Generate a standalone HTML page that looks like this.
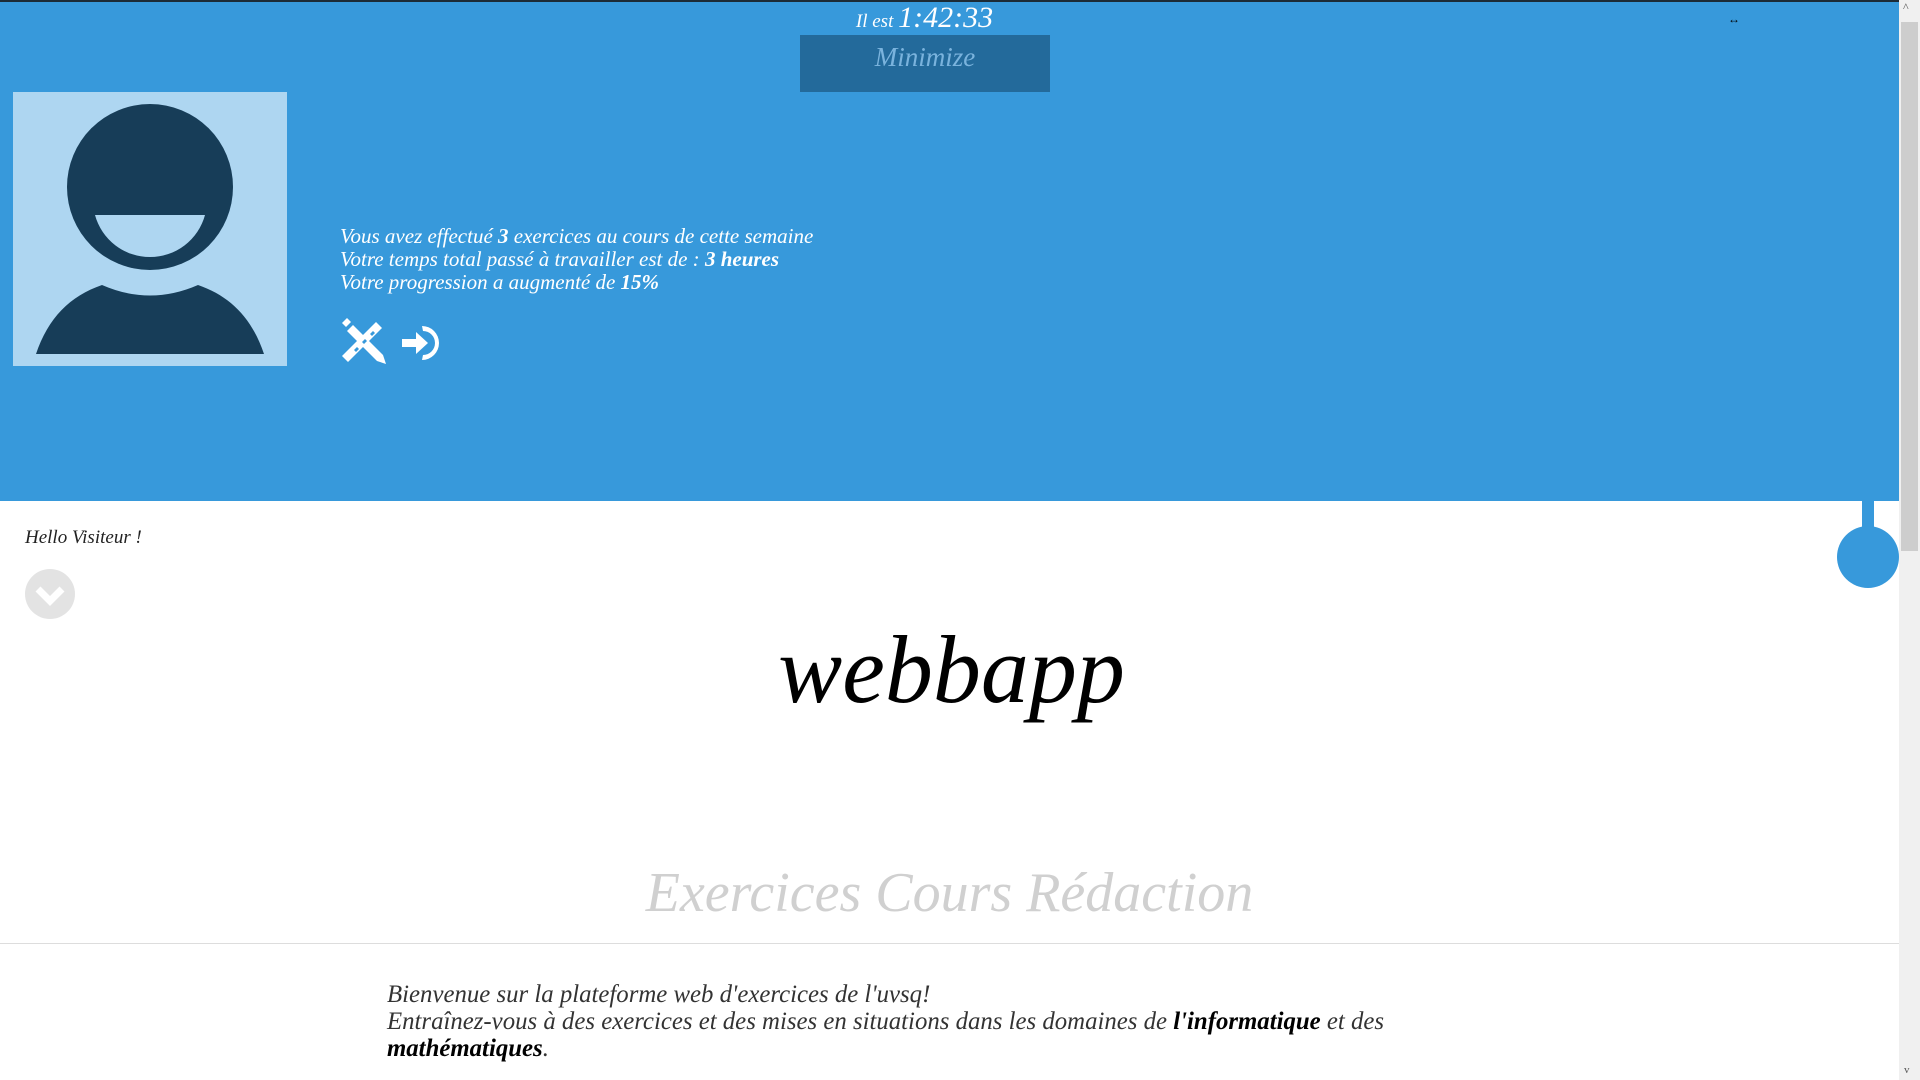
<!DOCTYPE html>
<html><head><meta charset="utf-8"><style>
*{margin:0;padding:0;box-sizing:border-box}
body{width:1920px;height:1080px;overflow:hidden;background:#fff;font-family:"Liberation Serif",serif;position:relative}
.hdr{position:absolute;left:0;top:0;width:1899px;height:501px;background:#3799db;border-top:2px solid #1c2b36}
.abs{position:absolute}
.it{font-style:italic}
.scroll{position:absolute;left:1899px;top:0;width:21px;height:1080px;background:#f0f0f0}
.thumb{position:absolute;left:1901px;top:22px;width:17px;height:529px;background:#cdcdcd}
</style></head><body>
<div class="hdr"></div>
<div class="abs it" style="left:0;width:1849px;top:0;text-align:center;color:#fff;line-height:36px;white-space:nowrap"><span style="font-size:19px">Il est </span><span style="font-size:30px">1:42:33</span></div>
<div class="abs" style="left:800px;top:35px;width:250px;height:57px;background:#236a9b;color:#7ab3dd;font-style:italic;font-size:27px;text-align:center;line-height:44px">Minimize</div>
<div class="abs" style="left:1728px;top:12px;font-size:12px;color:#000">↔</div>
<svg class="abs" style="left:13px;top:92px" width="274" height="274" viewBox="13 92 274 274">
<rect x="13" y="92" width="274" height="274" fill="#aed6f1"/>
<circle cx="150" cy="187" r="83" fill="#173d58"/>
<path d="M95 215 H205 A57 57 0 0 1 95 215 Z" fill="#aed6f1"/>
<path d="M36 354 C48 318 70 296 102 285 Q150 306 198 285 C230 296 252 318 264 354 Z" fill="#173d58"/>
</svg>
<div class="abs it" style="left:340px;top:225px;color:#fff;font-size:21px;line-height:23px;white-space:nowrap">
Vous avez effectué <b>3</b> exercices au cours de cette semaine<br>
Votre temps total passé à travailler est de : <b>3 heures</b><br>
Votre progression a augmenté de <b>15%</b></div>
<svg class="abs" style="left:340px;top:316px" width="120" height="50" viewBox="0 0 120 50">
<g fill="#fff">
<polygon points="2,7 7,2 11,6 6,11"/>
<polygon points="9,13 13,9 43,39 46,48 37,45 7,15"/>
<polygon points="2,40 36,6 42,12 8,46"/>
<polygon points="14,34 17,31 19,33 16,36" fill="#3799db"/>
<polygon points="22,26 25,23 27,25 24,28" fill="#3799db"/>
<polygon points="30,18 33,15 35,17 32,20" fill="#3799db"/>
<path d="M62 23 h14 v-7 l12 11 l-12 11 v-7 h-14 z"/>
<path d="M82 10 A17 17 0 1 1 82 44 l1 -5 A12 12 0 1 0 83 15 z"/>
</g></svg>
<div class="abs" style="left:1862px;top:500px;width:12px;height:30px;background:#3799db"></div>
<div class="abs" style="left:1837px;top:526px;width:62px;height:62px;border-radius:50%;background:#3799db"></div>
<div class="abs it" style="left:25px;top:527px;font-size:19px;color:#222">Hello Visiteur !</div>
<svg class="abs" style="left:25px;top:569px" width="50" height="50"><circle cx="25" cy="25" r="25" fill="#e3e3e3"/><path d="M13 20 L25 32 L37 20" stroke="#fff" stroke-width="7" fill="none"/></svg>
<div class="abs it" style="left:0;width:1899px;top:605px;text-align:center;font-size:96px;line-height:130px;color:#000;padding-left:4px">webbapp</div>
<div class="abs it" style="left:0;width:1899px;top:853px;text-align:center;font-size:56px;line-height:80px;color:#d0d0d0">Exercices Cours Rédaction</div>
<div class="abs" style="left:0;top:943px;width:1899px;height:1px;background:#ddd"></div>
<div class="abs it" style="left:387px;top:981px;font-size:24.8px;line-height:27px;color:#333;width:1100px">
Bienvenue sur la plateforme web d'exercices de l'uvsq!<br>
Entraînez-vous à des exercices et des mises en situations dans les domaines de <b style="color:#000">l'informatique</b> et des<br><b style="color:#000">mathématiques</b>.</div>
<div class="scroll"></div><div class="thumb"></div>
<div class="abs" style="left:1903px;top:0;font-size:12px;color:#555">^</div>
<div class="abs" style="left:1904px;top:1064px;font-size:11px;color:#555">v</div>
</body></html>
